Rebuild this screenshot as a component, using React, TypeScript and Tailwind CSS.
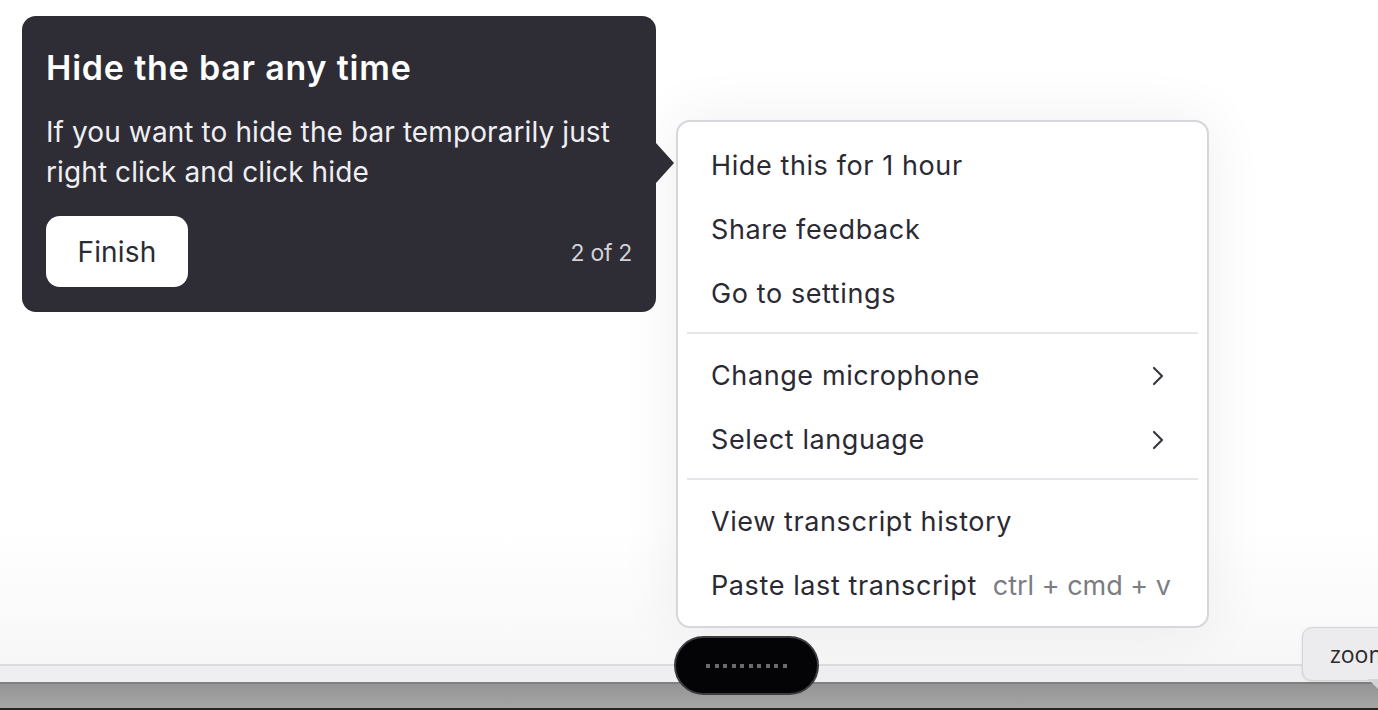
import React from "react";

const font = { fontFamily: "Inter, 'Noto Sans', sans-serif" };

function Chevron() {
  return (
    <svg width="14" height="20" viewBox="0 0 14 20" fill="none">
      <path d="M3 2 L11 10 L3 18" stroke="#3a3940" strokeWidth="2.2" strokeLinecap="round" strokeLinejoin="round" />
    </svg>
  );
}

function Item({ label, right, pr = "pr-[36px]" }: { label: string; right?: React.ReactNode; pr?: string }) {
  return (
    <div className={`flex h-[64px] items-center justify-between pt-[4px] pl-[33px] ${pr} text-[#2b2a33]`}>
      <span className="text-[27px] tracking-[0.6px]">{label}</span>
      {right}
    </div>
  );
}

function Sep() {
  return <div className="mx-[9px] my-[8px] h-[2px] bg-[#e6e6ea]" />;
}

export default function App() {
  return (
    <div className="relative flex h-[710px] w-full flex-col overflow-hidden bg-white" style={font}>
      <div className="relative flex h-[664px] items-start bg-gradient-to-b from-white from-80% to-[#f7f7f8]">
        <div className="relative ml-[22px] mt-[16px] flex h-[296px] w-[634px] flex-col rounded-[14px] bg-[#2e2c35] px-[24px] pt-[30px] text-white">
          <div className="text-[34px] font-semibold leading-[44px] tracking-[0.8px]">Hide the bar any time</div>
          <div className="mt-[22px] text-[28px] leading-[40px] text-[#efeff2] tracking-[0.1px]">
            If you want to hide the bar temporarily just right click and click hide
          </div>
          <div className="mt-[24px] flex items-center justify-between">
            <div className="flex h-[71px] w-[142px] items-center justify-center rounded-[14px] bg-white text-[28px] tracking-[0.2px] text-[#2b2a33]">
              Finish
            </div>
            <div className="pt-[4px] text-[23px] text-[#d2d2d7] tracking-[-0.3px]">2 of 2</div>
          </div>
          <div className="absolute left-full top-[127px] h-0 w-0 border-y-[20px] border-l-[18px] border-y-transparent border-l-[#2e2c35]" />
        </div>
        <div className="ml-[20px] mt-[120px] flex w-[533px] flex-col rounded-[14px] border-2 border-[#d6d6dc] bg-white py-[10px] shadow-[0_0_60px_rgba(0,0,0,0.07)]">
          <Item label="Hide this for 1 hour" />
          <Item label="Share feedback" />
          <Item label="Go to settings" />
          <Sep />
          <Item label="Change microphone" right={<Chevron />} pr="pr-[42px]" />
          <Item label="Select language" right={<Chevron />} pr="pr-[42px]" />
          <Sep />
          <Item label="View transcript history" />
          <Item
            label="Paste last transcript"
            right={<span className="text-[27px] text-[#7c7c83]">ctrl + cmd + v</span>}
          />
        </div>
      </div>
      <div className="h-[2px] bg-[#dcdce0]" />
      <div className="h-[16px] bg-[#efeff2]" />
      <div className="h-[2px] bg-[#808082]" />
      <div className="h-[24px] bg-gradient-to-b from-[#949494] to-[#a6a6a6]" />
      <div className="flex-1 bg-[#262620]" />

      <div className="absolute left-[674px] top-[636px] flex h-[59px] w-[145px] items-center justify-center gap-[4.5px] rounded-full border-2 border-[#3c3b42] bg-[#040407]">
        {Array.from({ length: 10 }).map((_, i) => (
          <div key={i} className="h-[4px] w-[4px] bg-[#6b6b6e]" />
        ))}
      </div>

      <div className="absolute left-[1302px] top-[627px] flex h-[54px] w-[110px] items-center rounded-[10px] border border-[#d4d4d6] bg-[#ececee] pl-[27px] text-[23px] text-[#2a2a2a] shadow-[0_1px_3px_rgba(0,0,0,0.1)]" style={{ fontFamily: "'Open Sans', sans-serif" }}>
        zoom
      </div>
      <div className="absolute left-[1368px] top-[679px] h-0 w-0 border-l-[10px] border-t-[10px] border-l-transparent border-t-[#d4d4d6]" />
    </div>
  );
}
